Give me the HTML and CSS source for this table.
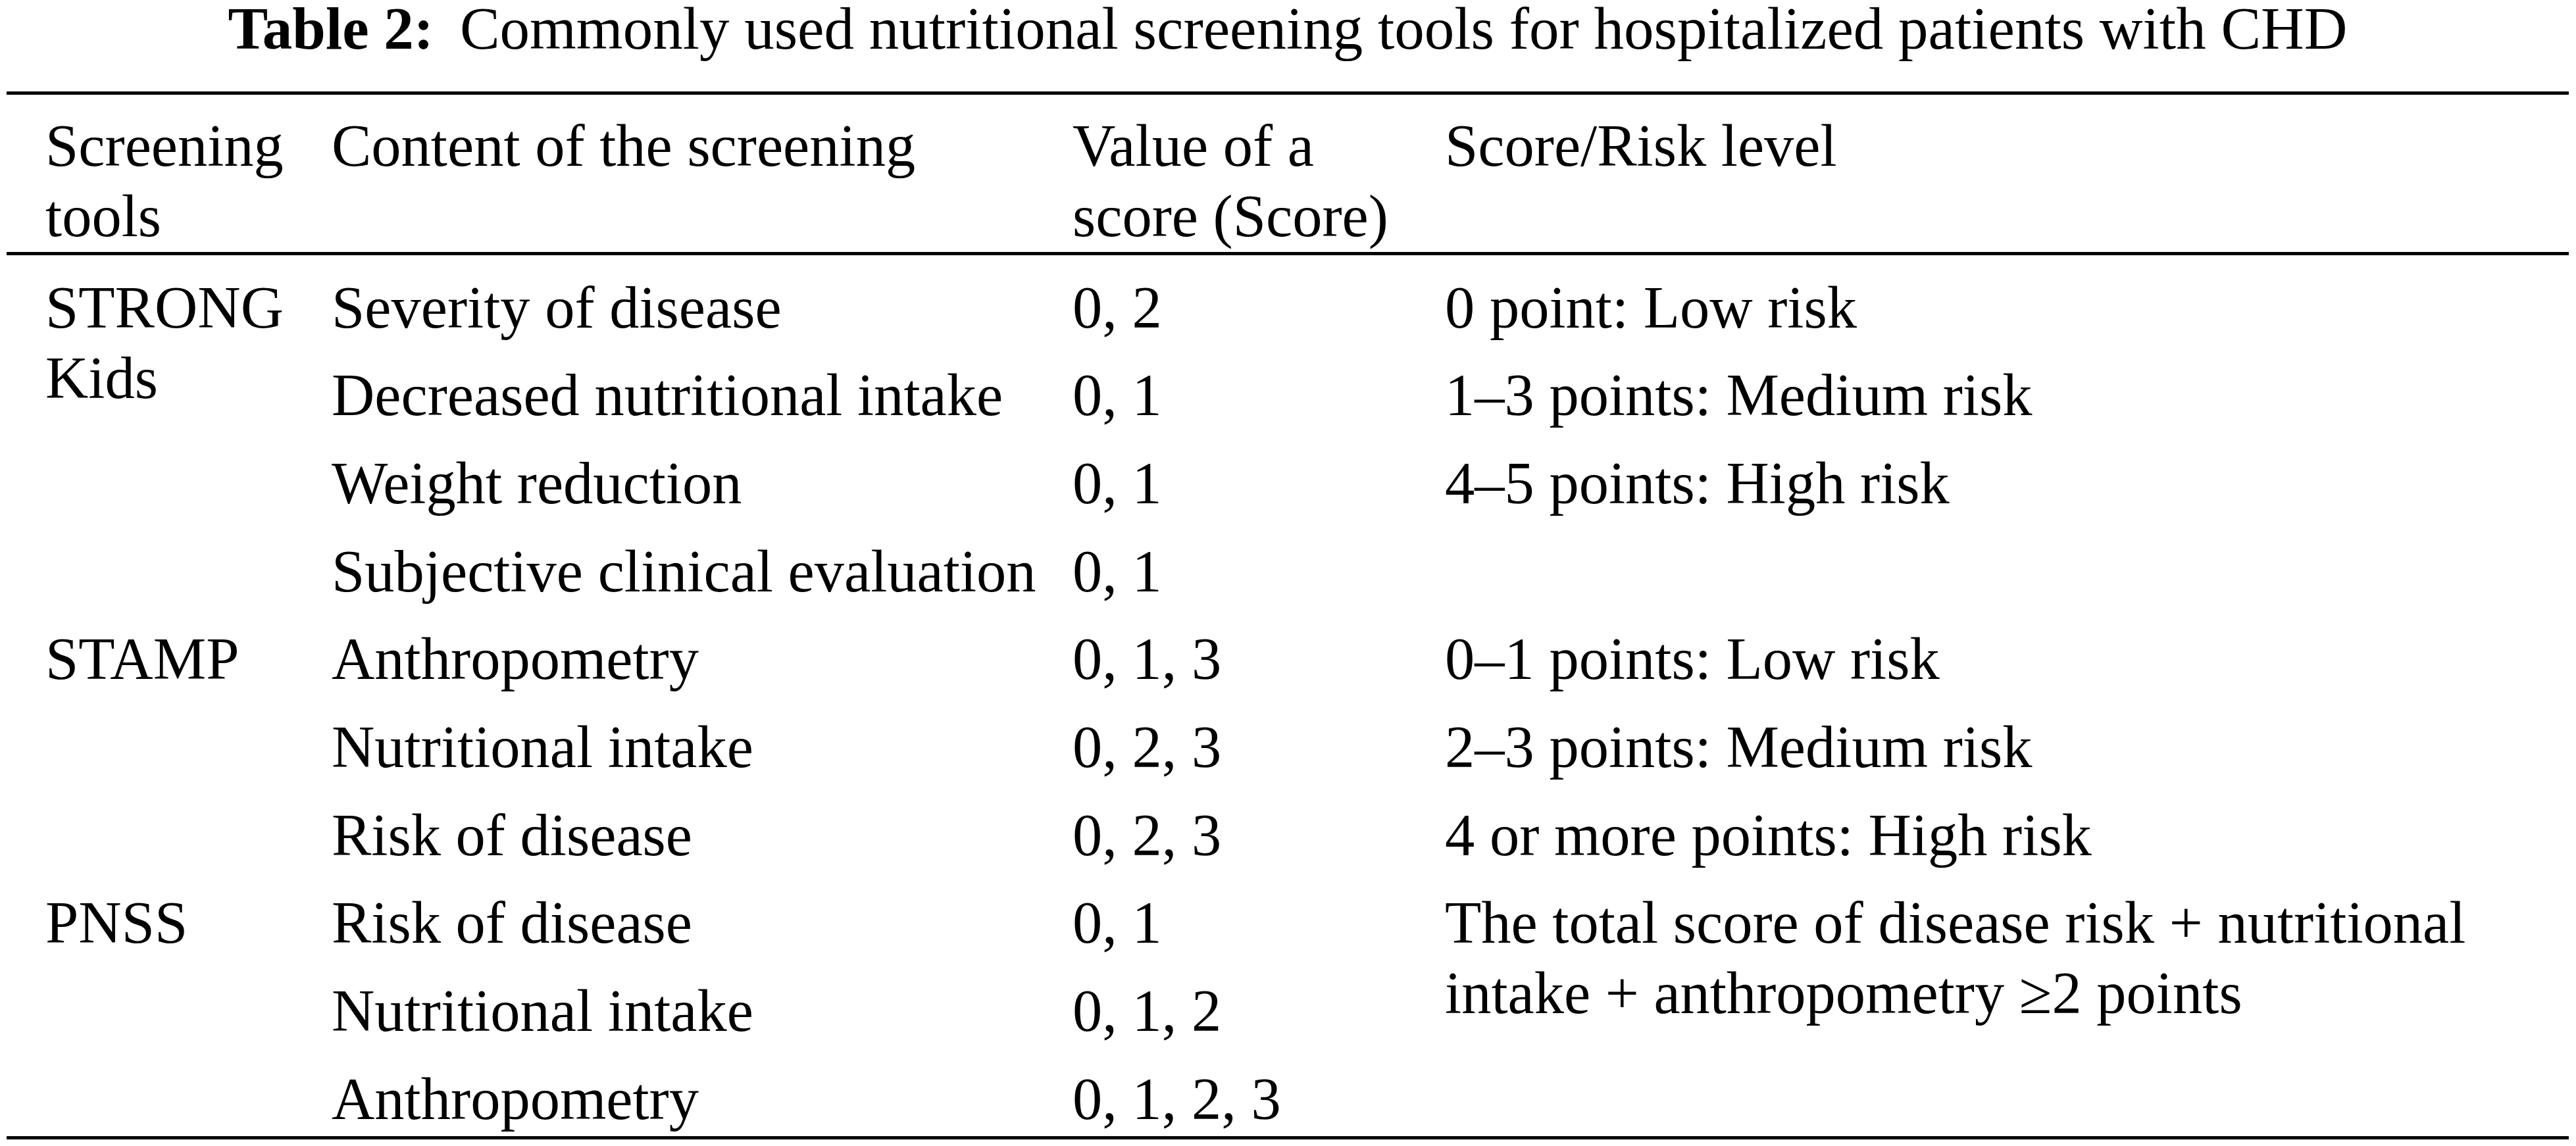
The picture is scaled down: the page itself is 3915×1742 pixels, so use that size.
FILE: index.html
```html
<!DOCTYPE html>
<html lang="en">
<head>
<meta charset="utf-8">
<title>Table 2</title>
<link rel="stylesheet" href="styles.css">
</head>
<body>
<div class="page">
  <h1 class="caption"><b class="lbl">Table 2:</b> <span class="cap-text">Commonly used nutritional screening tools for hospitalized patients with CHD</span></h1>
  <div class="table">
    <div class="grid head">
      <div class="cell">Screening tools</div>
      <div class="cell">Content of the screening</div>
      <div class="cell">Value of a score (Score)</div>
      <div class="cell">Score/Risk level</div>
    </div>
    <div class="grid body">
      <div class="cell tool span4">STRONG Kids</div>
      <div class="cell c2">Severity of disease</div>
      <div class="cell c3">0, 2</div>
      <div class="cell c4">0 point: Low risk</div>
      <div class="cell c2">Decreased nutritional intake</div>
      <div class="cell c3">0, 1</div>
      <div class="cell c4">1–3 points: Medium risk</div>
      <div class="cell c2">Weight reduction</div>
      <div class="cell c3">0, 1</div>
      <div class="cell c4">4–5 points: High risk</div>
      <div class="cell c2">Subjective clinical evaluation</div>
      <div class="cell c3">0, 1</div>
      <div class="cell c4"></div>

      <div class="cell tool span3">STAMP</div>
      <div class="cell c2">Anthropometry</div>
      <div class="cell c3">0, 1, 3</div>
      <div class="cell c4">0–1 points: Low risk</div>
      <div class="cell c2">Nutritional intake</div>
      <div class="cell c3">0, 2, 3</div>
      <div class="cell c4">2–3 points: Medium risk</div>
      <div class="cell c2">Risk of disease</div>
      <div class="cell c3">0, 2, 3</div>
      <div class="cell c4">4 or more points: High risk</div>

      <div class="cell tool span3">PNSS</div>
      <div class="cell c2">Risk of disease</div>
      <div class="cell c3">0, 1</div>
      <div class="cell c4 span3">The total score of disease risk + nutritional intake + anthropometry ≥2 points</div>
      <div class="cell c2">Nutritional intake</div>
      <div class="cell c3">0, 1, 2</div>
      <div class="cell c2">Anthropometry</div>
      <div class="cell c3">0, 1, 2, 3</div>
    </div>
  </div>
</div>
</body>
</html>
```
FILE: styles.css
```css
html, body {
  margin: 0;
  padding: 0;
  background: #ffffff;
}

body {
  font-family: "Liberation Serif", "Times New Roman", serif;
  color: #000000;
}

.page {
  width: 3915px;
  padding: 0 11px 0 10px;
  box-sizing: border-box;
}

.caption {
  margin: 0 0 51px 0;
  height: 88px;
  font-size: 91px;
  line-height: 88px;
  font-weight: normal;
  text-align: center;
  white-space: nowrap;
}

.lbl {
  font-weight: bold;
  margin-right: 17px;
}

.table {
  border-top: 5px solid #000;
  border-bottom: 5px solid #000;
  font-size: 90.5px;
  line-height: 107px;
}

.grid {
  display: grid;
  grid-template-columns: 435px 1126px 566px 1fr;
  padding-left: 59px;
}

.head {
  border-bottom: 5px solid #000;
  padding-top: 24px;
  padding-bottom: 1px;
}

.body {
  grid-template-rows: repeat(10, 133.7px);
  grid-auto-flow: row dense;
  padding-bottom: 2px;
}

.body .cell {
  padding-top: 25.5px;
}

.tool {
  grid-column: 1;
}

.c2 { grid-column: 2; }
.c3 { grid-column: 3; }
.c4 { grid-column: 4; }

.span4 { grid-row: span 4; }
.span3 { grid-row: span 3; }
```
